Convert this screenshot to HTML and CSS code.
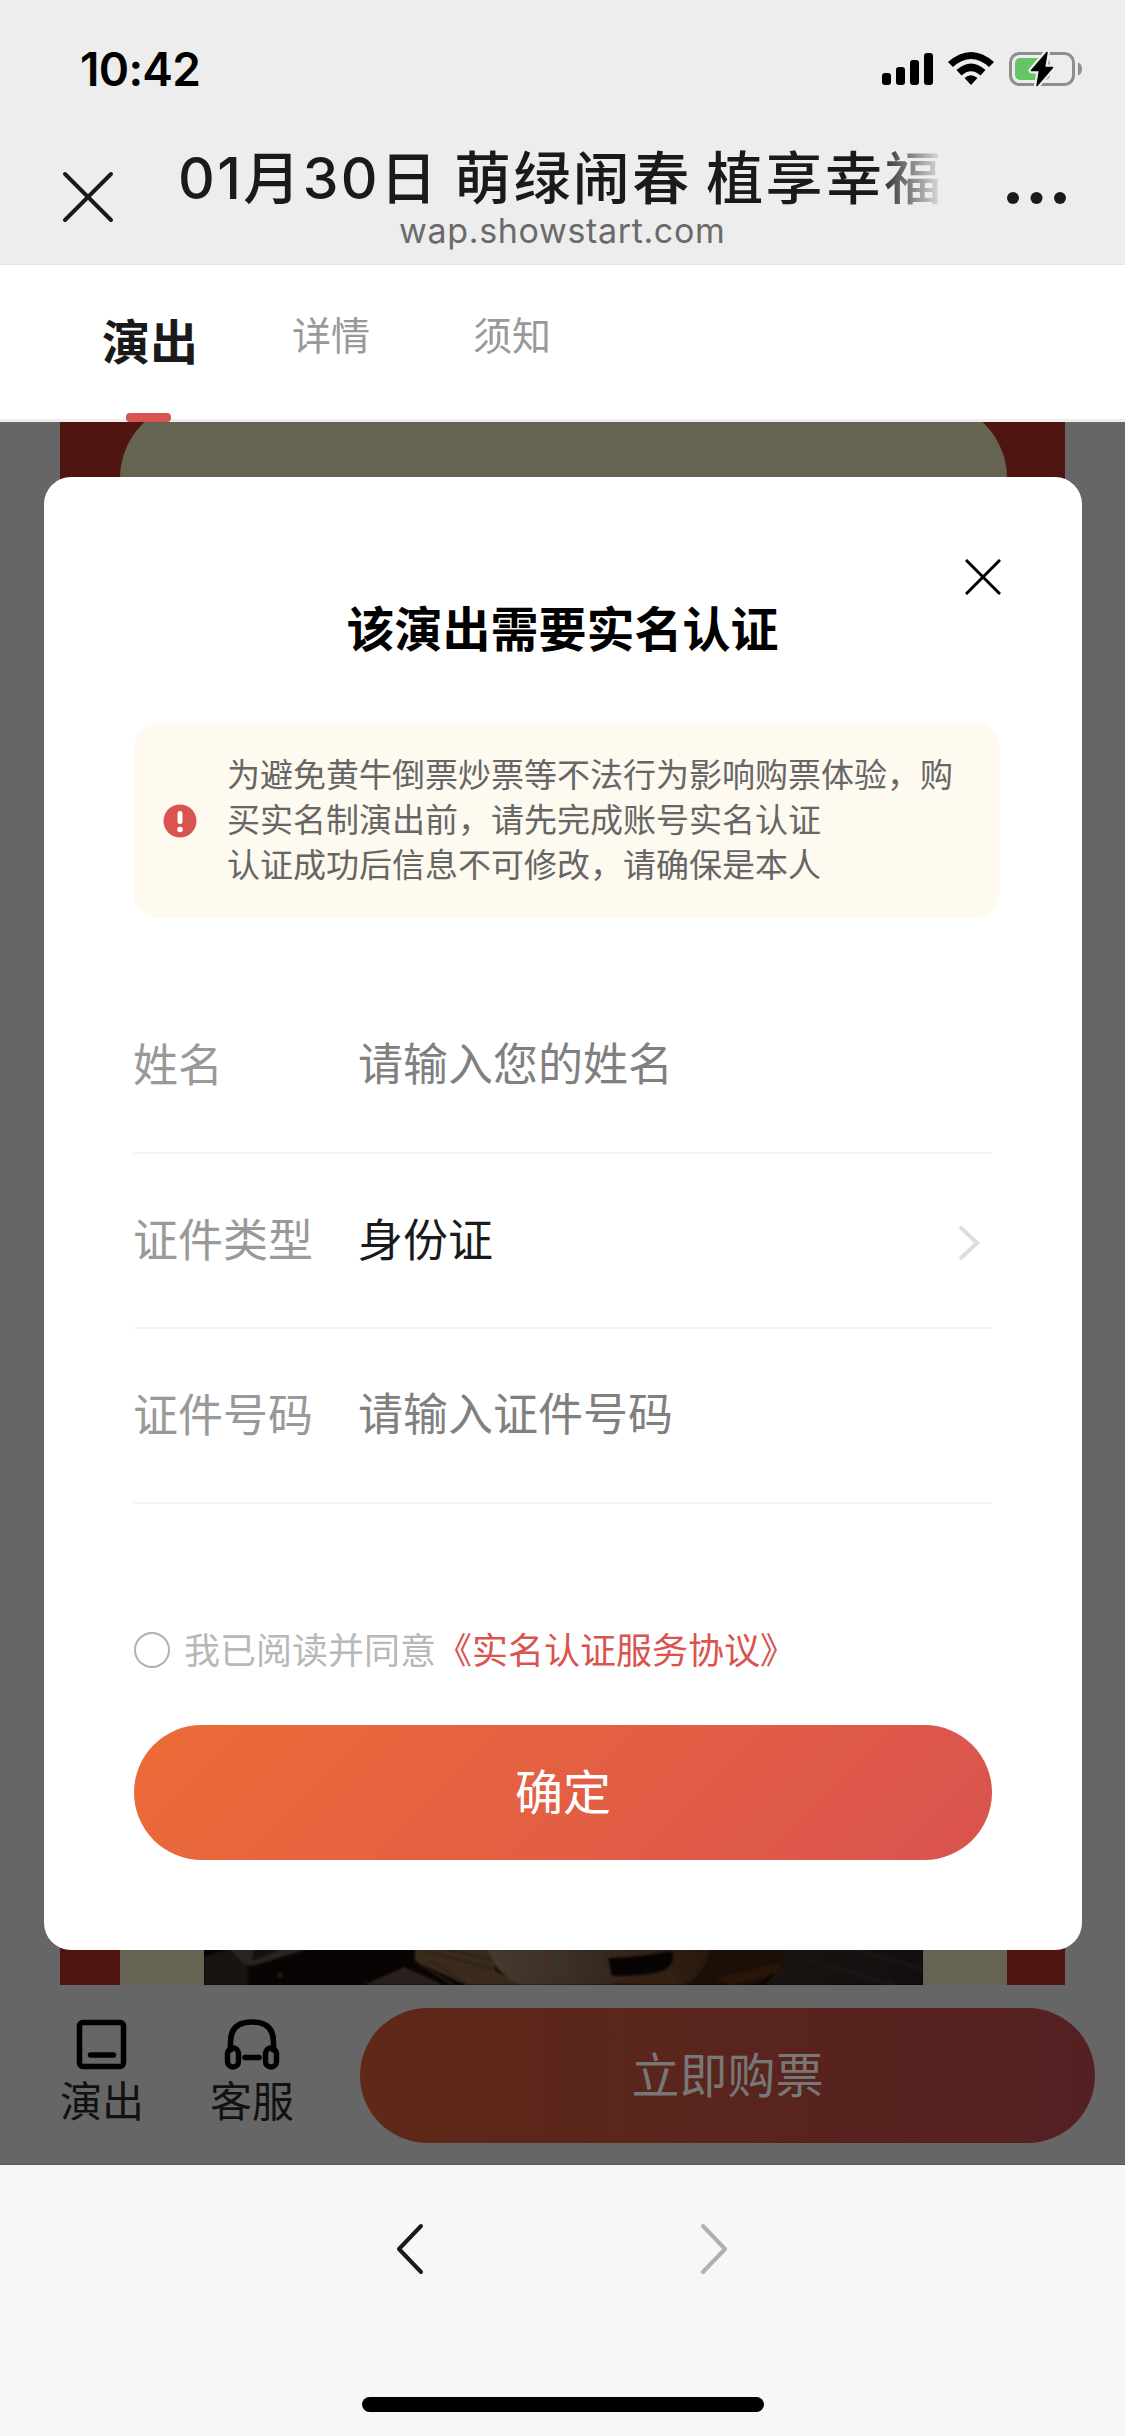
FILE: index.html
```html
<!DOCTYPE html>
<html lang="zh-CN">
<head>
<meta charset="utf-8">
<title>实名认证</title>
<link rel="stylesheet" href="styles.css">
</head>
<body>
<div class="screen">
  <header class="topbar">
    <div class="status">
      <span class="time">10:42</span>
      <svg class="status-icons" width="210" height="50" viewBox="878 44 210 50">
        <rect x="882" y="73" width="9" height="12" rx="3"/>
        <rect x="896" y="67" width="9" height="18" rx="3"/>
        <rect x="910" y="60" width="9" height="25" rx="3"/>
        <rect x="924" y="53" width="9" height="32" rx="3"/>
        <path d="M948 62Q971 42 994 62L989 67Q971 51 953 67Z"/>
        <path d="M956.500 70Q971 57 985.500 70L980.500 75.500Q971 67 961.500 75.500Z"/>
        <path d="M964.500 78Q971 72.500 977.500 78L971 85Z"/>
        <rect x="1010.500" y="53.500" width="63" height="31" rx="9" fill="none" stroke="#8e8e8e" stroke-width="3"/>
        <path d="M1078 62.500Q1082 64 1082 69Q1082 74 1078 75.500Z" fill="#8e8e8e"/>
        <rect x="1015" y="58" width="35" height="22" rx="5" fill="#65c466"/>
        <path d="M1047 52.500L1031.500 70.500H1039.500L1037 85.500L1052.500 67.500H1044.500Z" stroke="#ededed" stroke-width="6" stroke-linejoin="round" fill="#ededed"/>
        <path d="M1047 52.500L1031.500 70.500H1039.500L1037 85.500L1052.500 67.500H1044.500Z" stroke="#000" stroke-width="1.500" stroke-linejoin="round"/>
      </svg>
    </div>
    <div class="nav">
      <svg class="nav-close" width="52" height="52" viewBox="0 0 52 52"><path d="M3 3L49 49M49 3L3 49"/></svg>
      <div class="nav-text">
        <div class="nav-title">01月30日 萌绿闹春 植享幸福</div>
        <div class="nav-url">wap.showstart.com</div>
      </div>
      <svg class="nav-more" width="64" height="16" viewBox="0 0 64 16"><circle cx="8" cy="8" r="6"/><circle cx="31.500" cy="8" r="6"/><circle cx="55" cy="8" r="6"/></svg>
    </div>
  </header>

  <nav class="tabs">
    <div class="tab tab-on">演出</div>
    <div class="tab tab-second">详情</div>
    <div class="tab tab-third">须知</div>
  </nav>

  <main class="page">
    <div class="poster">
      <div class="paper">
        <svg class="photo" width="719" height="36" viewBox="0 0 719 36" preserveAspectRatio="none">
          <defs>
            <linearGradient id="cup" x1="0" x2="1"><stop offset="0" stop-color="#473a2e"/><stop offset=".35" stop-color="#3b3026"/><stop offset=".6" stop-color="#35261b"/><stop offset="1" stop-color="#2a180c"/></linearGradient>
            <linearGradient id="table" x1="0" x2="1"><stop offset="0" stop-color="#1b1413"/><stop offset="1" stop-color="#130e0e"/></linearGradient>
            <filter id="soft" x="0" y="0" width="1" height="1" color-interpolation-filters="sRGB"><feGaussianBlur stdDeviation="1.200"/></filter>
          </defs>
          <rect width="719" height="36" fill="#080403"/>
          <g filter="url(#soft)">
            <rect width="719" height="36" fill="#080403"/>
            <path d="M0 8L24 0H30L44 18V36H0Z" fill="#191312"/>
            <path d="M26 0H104L48 17L40 15Z" fill="#2b2420"/>
            <path d="M50 0L78 0L48 12Z" fill="#14100e"/>
            <circle cx="76" cy="26" r="2.500" fill="#2a1d14"/>
            <path d="M160 36L200 18L218 26L240 36Z" fill="#2b201e"/>
            <path d="M211 0H286L292 22L316 36H262L211 12Z" fill="#3a2b1d"/>
            <path d="M222 2L288 20M240 0L294 12M214 14L250 36M226 12L262 34" stroke="#2c2017" stroke-width="2" fill="none"/>
            <path d="M284 0H506V8Q500 30 480 36H316Q290 24 284 0Z" fill="url(#cup)"/>
            <path d="M344 0V36M362 0V36" stroke="#472f1f" stroke-width="3"/>
            <path d="M404 9Q436 8 468 2Q472 12 462 20Q450 27 408 27Z" fill="#070302"/>
            <path d="M408 32Q450 30 468 22Q474 30 480 36H408Z" fill="#36200f"/>
            <path d="M506 0H582Q574 30 548 36H480Q500 26 506 0Z" fill="#1c0f08"/>
            <path d="M510 30L576 14L578 22L530 36Z" fill="#2a1608"/>
            <path d="M582 0H719V36H560Q576 24 582 0Z" fill="url(#table)"/>
            <path d="M600 10L690 36M650 0L719 20" stroke="#1d1616" stroke-width="3"/>
          </g>
        </svg>
      </div>
    </div>

    <footer class="buybar">
      <div class="action">
        <svg width="56" height="56" viewBox="0 0 56 56"><rect x="5.500" y="5.500" width="44" height="44" rx="3.500"/><path d="M16.500 38H39.500"/></svg>
        <span>演出</span>
      </div>
      <div class="action">
        <svg width="56" height="56" viewBox="0 0 56 56"><path d="M6.500 33V25Q6.500 5 28 5Q49.500 5 49.500 25V33"/><rect x="3.500" y="31" width="11" height="19" rx="5.500"/><rect x="41.500" y="31" width="11" height="19" rx="5.500"/><path d="M21 40.500H35"/></svg>
        <span>客服</span>
      </div>
      <div class="buy">立即购票</div>
    </footer>

    <section class="modal">
      <svg class="modal-close" width="36" height="36" viewBox="0 0 36 36"><path d="M1 1L35 35M35 1L1 35"/></svg>
      <h1 class="modal-title">该演出需要实名认证</h1>
      <div class="notice">
        <svg class="warn" width="34" height="34" viewBox="0 0 34 34"><circle cx="17" cy="17" r="16.500" fill="#d9534f"/><rect x="14.500" y="7" width="5" height="13" rx="2.500" fill="#fff"/><circle cx="17" cy="25.500" r="2.800" fill="#fff"/></svg>
        <p>为避免黄牛倒票炒票等不法行为影响购票体验，购<br>买实名制演出前，请先完成账号实名认证<br>认证成功后信息不可修改，请确保是本人</p>
      </div>
      <div class="form">
        <div class="row"><span class="label">姓名</span><span class="hint">请输入您的姓名</span></div>
        <div class="row"><span class="label">证件类型</span><span class="value">身份证</span><svg class="more" width="24" height="38" viewBox="0 0 24 38"><path d="M3 3L20 19L3 35"/></svg></div>
        <div class="row"><span class="label">证件号码</span><span class="hint">请输入证件号码</span></div>
      </div>
      <div class="agree"><i class="radio"></i><span class="terms">我已阅读并同意<b>《实名认证服务协议》</b></span></div>
      <div class="confirm">确定</div>
    </section>
  </main>

  <div class="browserbar">
    <div class="arrows">
      <svg width="30" height="54" viewBox="0 0 30 54"><path d="M26 4L4 27L26 50" stroke="#1a1a1a"/></svg>
      <svg width="30" height="54" viewBox="0 0 30 54"><path d="M4 4L26 27L4 50" stroke="#b0b0b0"/></svg>
    </div>
    <div class="home"></div>
  </div>
</div>
</body>
</html>
```
FILE: styles.css
```css
* { box-sizing: border-box; }
body {
  margin: 0;
  font-family: Inter, "Noto Sans CJK SC", sans-serif;
}
svg { display: block; flex: none; }
.screen {
  width: 1125px;
  height: 2436px;
  display: flex;
  flex-direction: column;
  overflow: hidden;
}

/* status and navigation */
.topbar {
  height: 265px;
  background: #ededed;
  border-bottom: 1px solid #e2e2e2;
}
.status {
  height: 130px;
  padding: 44px 37px 0 80px;
  display: flex;
  justify-content: space-between;
}
.time {
  font-size: 46px;
  font-weight: 600;
  line-height: 50px;
  letter-spacing: -0.7px;
}
.nav {
  height: 134px;
  padding: 0 56px 0 62px;
  display: flex;
}
.nav-close { margin-top: 41px; }
.nav-close path { stroke: #1a1a1a; stroke-width: 4; stroke-linecap: round; }
.nav-text {
  width: 766px;
  margin-left: 64px;
}
.nav-title {
  height: 98px;
  margin-bottom: -18px;
  line-height: 98px;
  width: 780px;
  white-space: nowrap;
  font-size: 57px;
  letter-spacing: 2.4px;
  word-spacing: -3px;
  font-weight: 500;
  color: #1a1a1a;
  -webkit-mask-image: linear-gradient(90deg, #000 698px, transparent 768px);
  mask-image: linear-gradient(90deg, #000 698px, transparent 768px);
}
.nav-url {
  margin-left: 221px;
  font-size: 34px;
  line-height: 42px;
  letter-spacing: 0.65px;
  color: #6a6a6a;
}
.nav-more { margin: 60px 0 0 auto; fill: #1a1a1a; }

/* tabs */
.tabs {
  height: 157px;
  padding-left: 102px;
  display: flex;
  border-bottom: 3px solid #eee;
  background: #fff;
}
.tab {
  font-size: 39px;
  line-height: 56px;
  margin-top: 43px;
  color: #999;
}
.tab-on {
  position: relative;
  font-size: 48px;
  line-height: 70px;
  margin-top: 43px;
  font-weight: 700;
  color: #1a1a1a;
}
.tab-on::after {
  content: "";
  position: absolute;
  left: 24px;
  top: 105px;
  width: 45px;
  height: 9px;
  border-radius: 4px;
  background: #d9534f;
}
.tab-second { margin-left: 94px; }
.tab-third { margin-left: 103px; }

/* dimmed page */
.page {
  position: relative;
  height: 1743px;
  background: #666;
  border-bottom: 1px solid #5a5657;
}
.poster {
  width: 1005px;
  height: 1563px;
  margin-left: 60px;
  padding: 0 58px 0 60px;
  background: #4f1511;
  overflow: hidden;
}
.paper {
  height: 1633px;
  margin-top: -20px;
  padding-top: 1547px;
  border-radius: 76px 76px 0 0;
  background: #656351;
}
.photo { margin-left: 84px; }
.buybar {
  height: 179px;
  padding: 23px 30px 0 48px;
  display: flex;
}
.action {
  width: 108px;
  margin-right: 42px;
  padding-top: 9px;
  display: flex;
  flex-direction: column;
  align-items: center;
  font-size: 42px;
  line-height: 58px;
  color: #111;
}
.action + .action { margin-right: 54px; }
.action svg { fill: none; stroke: #000; stroke-width: 5.5; stroke-linecap: round; }
.buy {
  width: 735px;
  height: 135px;
  line-height: 135px;
  border-radius: 68px;
  text-align: center;
  font-size: 48px;
  color: #777;
  background: linear-gradient(90deg, #5e2917, #552022);
}

/* dialog */
.modal {
  position: absolute;
  left: 44px;
  top: 55px;
  width: 1038px;
  height: 1473px;
  padding: 82px 81px 0 90px;
  border-radius: 27px;
  background: #fff;
}
.modal-close { margin-left: auto; }
.modal-close path { stroke: #000; stroke-width: 3; }
.modal-title {
  margin: 0;
  height: 128px;
  padding-right: 10px;
  font-size: 48px;
  line-height: 70px;
  font-weight: 700;
  text-align: center;
}
.notice {
  width: 866px;
  height: 195px;
  padding-left: 29px;
  display: flex;
  align-items: center;
  gap: 30px;
  border-radius: 24px;
  background: #fffaf0;
}
.notice p {
  margin: 0;
  font-size: 33px;
  line-height: 45px;
  white-space: nowrap;
  color: #666;
}
.form {
  width: 858px;
  margin-top: 61px;
}
.row {
  height: 175px;
  display: flex;
  align-items: center;
  border-bottom: 2px solid #f4f4f4;
  font-size: 45px;
}
.label { width: 225px; margin-left: -1px; padding-bottom: 7px; color: #999; }
.hint { padding-bottom: 9px; color: #808080; }
.value { padding-bottom: 7px; color: #1a1a1a; }
.more { margin: 4px 11px 0 auto; }
.more path { fill: none; stroke: #ddd; stroke-width: 4; }
.agree {
  margin-top: 119px;
  height: 54px;
  display: flex;
  align-items: center;
  gap: 14px;
  font-size: 36px;
  color: #b8b8b8;
}
.agree b { font-weight: 400; color: #d9534f; }
.terms { padding-bottom: 4px; }
.radio {
  width: 36px;
  height: 36px;
  border: 2px solid #b2b2b2;
  border-radius: 50%;
}
.confirm {
  width: 858px;
  height: 135px;
  margin-top: 48px;
  line-height: 135px;
  text-align: center;
  border-radius: 68px;
  font-size: 48px;
  color: #fff;
  background: linear-gradient(135deg, #ec6c37, #d9534f);
}

/* browser toolbar */
.browserbar {
  height: 271px;
  background: #f7f7f7;
}
.arrows {
  height: 232px;
  padding: 57px 0 0 395px;
  display: flex;
  gap: 274px;
}
.arrows path { fill: none; stroke-width: 4; stroke-linecap: round; stroke-linejoin: round; }
.home {
  width: 402px;
  height: 15px;
  margin: 0 auto;
  border-radius: 8px;
  background: #000;
}
```
